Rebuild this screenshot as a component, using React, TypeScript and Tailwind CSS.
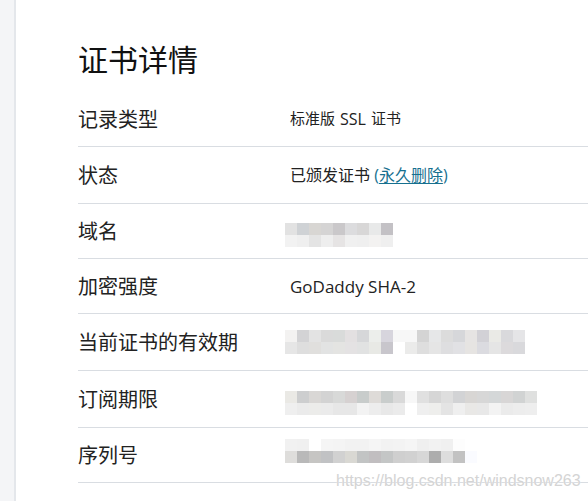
import React from "react";

const cjk = { fontFamily: '"Noto Sans CJK SC", "Noto Sans", sans-serif' };
const val = { fontFamily: '"Open Sans", "Noto Sans CJK SC", sans-serif' };

type Blocks = { a: string[]; b: string[] };

const domain: Blocks = {
  a: ["#e2e2e2", "#cfd2d5", "#d8d6d3", "#d5d4d4", "#cac8ca", "#dcdcde", "#d8d7d7", "#e8e9e9", "#c3c1c5"],
  b: ["#f2f2f2", "#efefef", "#e4e4e4", "#eeeeee", "#e6e4e4", "#f0f0f0", "#efefef", "#f3f2f1", "#efefef"],
};
const validity: Blocks = {
  a: ["#f3f2f1", "#d3d3d5", "#e3e3e3", "#dadada", "#d9dbda", "#e3e0e1", "#d6d7d9", "#eceeeb", "#d7d5dd", "#f7f7f7", "#f7f7f7", "#d4d4d4", "#e6e7e8", "#dcdcdc", "#d6d7da", "#e6e4e3", "#d2d1d6", "#eaeae6", "#d9d9dc", "#e5e5e7"],
  b: ["#e6e6e6", "#dedede", "#e0dfdd", "#e2e3e3", "#e4e4e2", "#e4e2e3", "#e1e2e2", "#e8e9e5", "#c8c6cc", "#ffffff", "#ebebea", "#dedede", "#e5e5e5", "#dedee0", "#e1e1e4", "#e6e4e2", "#dbdbe0", "#e5e5e5", "#dcdadc", "#d9d9dc"],
};
const subscription: Blocks = {
  a: ["#eae9e5", "#cdcecf", "#d9d7d5", "#d3d3d3", "#d8d9d8", "#d6d1d1", "#c8cccb", "#dedbd8", "#c9cdcc", "#d9d9d9", "#f7f7f7", "#e0e0e0", "#d6d6d6", "#dedede", "#d2d3d5", "#d8d6d4", "#d7d7d7", "#d4d7d8", "#d8d6d6", "#d1d3d3", "#dfe0df"],
  b: ["#efefef", "#ebebeb", "#ececea", "#ebebeb", "#e7e7e7", "#e7e7e7", "#f3f3f3", "#ededed", "#e8e8e8", "#ebebeb", "#ffffff", "#efefef", "#eeeeec", "#e4e4e4", "#efefef", "#e9e8e6", "#e8e8e8", "#f3f3f3", "#ebebeb", "#ededed", "#eeeeee"],
};
const serial: Blocks = {
  a: ["#f1f1f1", "#f0f0f0", "#ffffff", "#f5f5f5", "#f4f4f4", "#f2f2f2", "#f2f2f2", "#f5f5f5", "#f2f2f2", "#f3f3f3", "#f5f5f5", "#efefef", "#f2f2f2", "#f0f0f0", "#fdfdfd"],
  b: ["#dedddb", "#b9b9b9", "#c6c5c3", "#c1c2c4", "#d1d1d1", "#d9d8d3", "#c2c4c4", "#c1bec0", "#c4c6c6", "#cfcfcf", "#d1d1d1", "#d7d7d7", "#adadad", "#dddddd", "#c2c2c2", "#fafbff"],
};

function Pixels({ data, className }: { data: Blocks; className?: string }) {
  return (
    <div className={"ml-[-5px] flex flex-col " + (className ?? "")}>
      <div className="flex">
        {data.a.map((c, i) => (
          <div key={i} className="h-[12px] w-[12px]" style={{ backgroundColor: c }} />
        ))}
      </div>
      <div className="flex">
        {data.b.map((c, i) => (
          <div key={i} className="h-[12px] w-[12px]" style={{ backgroundColor: c }} />
        ))}
      </div>
    </div>
  );
}

function Row({ label, h, children }: { label: string; h: string; children: React.ReactNode }) {
  return (
    <div className={"flex items-center border-b border-[#d9dde2] " + h}>
      <div className="w-[212px] flex-none text-[20px] leading-none text-[#222]" style={cjk}>
        {label}
      </div>
      <div className="flex items-center text-[16px] leading-none text-[#222]" style={val}>
        {children}
      </div>
    </div>
  );
}

export default function App() {
  return (
    <div className="relative flex h-[501px] w-[588px] overflow-hidden bg-white">
      <div className="h-full w-[16px] flex-none border-r-2 border-[#e4e7eb] bg-[#f4f5f7]" />
      <div className="flex-1 pl-[62px]">
        <div className="pt-[43px] text-[30px] leading-none text-[#111]" style={cjk}>
          证书详情
        </div>
        <div className="mt-[18px] flex flex-col">
          <Row label="记录类型" h="h-[56px]">
            <span className="flex items-center text-[15px]">
              <span>标准版</span>
              <span className="mx-[5px] text-[16px]">SSL</span>
              <span>证书</span>
            </span>
          </Row>
          <Row label="状态" h="h-[57px]">
            <span>已颁发证书&nbsp;</span>
            <span className="text-[#16708f]">
              (<span className="underline underline-offset-2">永久删除</span>)
            </span>
          </Row>
          <Row label="域名" h="h-[55px]">
            <Pixels data={domain} className="mt-[8px]" />
          </Row>
          <Row label="加密强度" h="h-[55px]">
            <span className="text-[17px]">GoDaddy SHA-2</span>
          </Row>
          <Row label="当前证书的有效期" h="h-[57px]">
            <Pixels data={validity} />
          </Row>
          <Row label="订阅期限" h="h-[57px]">
            <Pixels data={subscription} className="mt-[8px]" />
          </Row>
          <Row label="序列号" h="h-[55px]">
            <Pixels data={serial} className="mb-[8px]" />
          </Row>
        </div>
      </div>
      <div
        className="absolute left-[336px] top-[472px] text-[16px] leading-[18px] text-[#d4d4d4]"
        style={{ fontFamily: '"Liberation Sans", Arial, sans-serif', textShadow: "0 0 1px #ffffff" }}
      >
        https://blog.csdn.net/windsnow263
      </div>
    </div>
  );
}
